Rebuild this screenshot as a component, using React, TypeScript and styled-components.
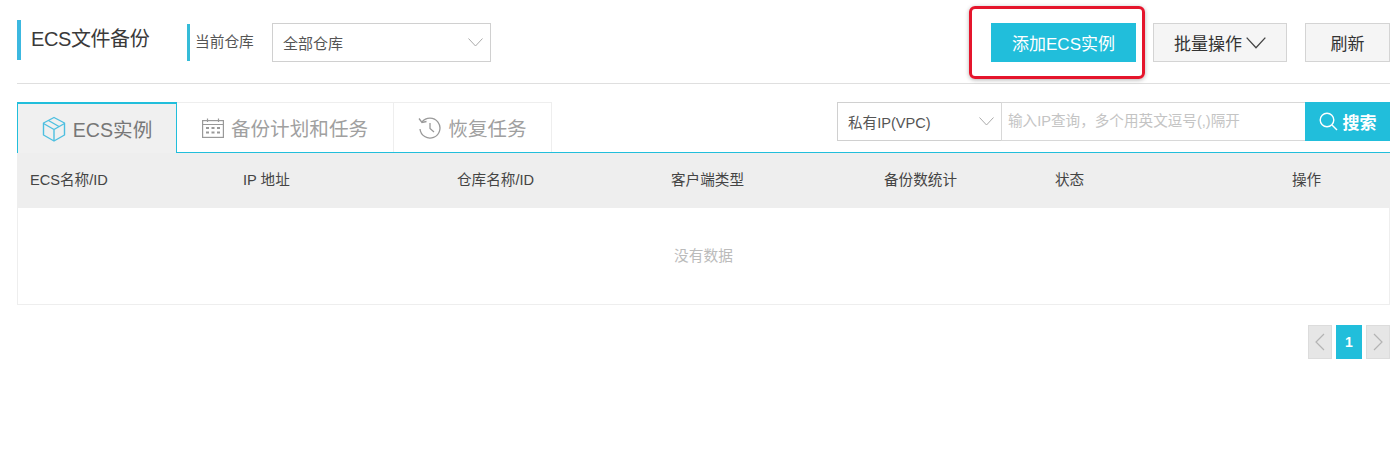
import React from "react";
import styled, { createGlobalStyle } from "styled-components";

const TEAL = "#21bedb";

const GlobalStyle = createGlobalStyle`
    body {
        margin: 0;
        background: #ffffff;
        font-family: "Liberation Sans", "Noto Sans CJK SC", sans-serif;
        color: #333333;
    }
`;

const Page = styled.div`
    width: 1373px;
    height: 469px;
    margin-left: 17px;
`;

const Header = styled.header`
    display: flex;
    align-items: flex-start;
    height: 63px;
    padding-top: 20px;
    border-bottom: 1px solid #dfdfdf;
`;

const Title = styled.h1`
    width: 170px;
    height: 40px;
    box-sizing: border-box;
    margin: 0;
    padding-left: 10px;
    border-left: 4px solid #3cb8e0;
    font-size: 20px;
    font-weight: 400;
    letter-spacing: -0.4px;
    line-height: 39px;
    color: #3a3a3a;
`;

const Warehouse = styled.div`
    display: flex;
    align-items: center;
    margin-top: 3px;
`;

const WarehouseLabel = styled.span`
    height: 37px;
    width: 85px;
    box-sizing: border-box;
    padding-left: 5px;
    border-left: 3px solid #35bcd8;
    font-size: 14.7px;
    line-height: 37px;
    color: #555555;
`;

const Select = styled.div<{ $width: number; $size: number }>`
    display: flex;
    align-items: center;
    justify-content: space-between;
    width: ${(p) => p.$width}px;
    height: 39px;
    box-sizing: border-box;
    padding: 0 7px 0 10px;
    background: #ffffff;
    border: 1px solid #d0d0d0;
    font-size: ${(p) => p.$size}px;
    color: #555555;
`;

const Actions = styled.div`
    display: flex;
    margin-left: auto;
    margin-top: 3px;
`;

const PrimaryButton = styled.button`
    position: relative;
    width: 145px;
    height: 39px;
    margin-right: 17px;
    padding: 0;
    border: 0;
    background: ${TEAL};
    color: #ffffff;
    font: inherit;
    font-size: 17px;

    /* red annotation drawn over the screenshot */
    &::after {
        content: "";
        position: absolute;
        left: -22px;
        top: -17px;
        width: 170px;
        height: 67px;
        border: 3px solid #e5152c;
        border-radius: 6px;
        box-shadow: 0 1px 4px rgba(0, 0, 0, 0.3);
    }
`;

const GreyButton = styled.button<{ $width: number; $gap?: number }>`
    display: flex;
    align-items: center;
    justify-content: center;
    gap: 4px;
    width: ${(p) => p.$width}px;
    height: 39px;
    margin-right: ${(p) => p.$gap ?? 0}px;
    padding: 0;
    border: 1px solid #d4d4d4;
    background: #f5f5f5;
    color: #333333;
    font: inherit;
    font-size: 17px;
`;

const ToolRow = styled.div`
    display: flex;
    align-items: flex-start;
    justify-content: space-between;
    box-sizing: border-box;
    height: 51px;
    margin-top: 18px;
    border-bottom: 1px solid ${TEAL};
`;

const Tabs = styled.div`
    display: flex;
`;

const Tab = styled.div<{ $width: number; $active?: boolean }>`
    position: relative;
    z-index: 1;
    display: flex;
    align-items: center;
    justify-content: center;
    gap: 7px;
    width: ${(p) => p.$width}px;
    height: ${(p) => (p.$active ? 51 : 50)}px;
    box-sizing: border-box;
    background: ${(p) => (p.$active ? "#f0f0f0" : "#ffffff")};
    border: 1px solid ${(p) => (p.$active ? TEAL : "#eeeeee")};
    border-top: ${(p) => (p.$active ? `2px solid ${TEAL}` : "1px solid #eeeeee")};
    border-bottom: 0;
    border-left-width: ${(p) => (p.$active ? 1 : 0)}px;
    font-size: 19.6px;
    color: ${(p) => (p.$active ? "#777777" : "#a0a0a0")};
`;

const Search = styled.div`
    display: flex;
    height: 39px;
`;

const SearchInput = styled.div`
    width: 304px;
    box-sizing: border-box;
    padding-left: 6px;
    margin-left: -1px;
    border: 1px solid #d8d8d8;
    border-right: 0;
    font-size: 14.6px;
    line-height: 37px;
    color: #c4c4c4;
`;

const SearchButton = styled.button`
    display: flex;
    align-items: center;
    justify-content: center;
    gap: 5px;
    width: 85px;
    padding: 0;
    border: 0;
    background: ${TEAL};
    color: #ffffff;
    font: inherit;
    font-size: 17px;
    font-weight: 700;
`;

const Table = styled.div`
    border: 1px solid #eeeeee;
    border-top: 0;
`;

const HeadRow = styled.div`
    display: grid;
    grid-template-columns: 213px 214px 214px 213px 171px 237px 1fr;
    align-items: center;
    box-sizing: border-box;
    height: 55px;
    margin: 0 -1px;
    padding: 0 0 5px 13px;
    background: #eeeeee;
    font-size: 14.6px;
    color: #444444;
`;

const Empty = styled.div`
    display: flex;
    align-items: center;
    justify-content: center;
    box-sizing: border-box;
    height: 96px;
    padding-bottom: 4px;
    font-size: 14.7px;
    color: #bbbbbb;
`;

const Pager = styled.nav`
    display: flex;
    justify-content: flex-end;
    gap: 4px;
    margin-top: 20px;
`;

const PageBox = styled.div<{ $active?: boolean }>`
    display: flex;
    align-items: center;
    justify-content: center;
    width: ${(p) => (p.$active ? 26 : 24)}px;
    height: 34px;
    box-sizing: border-box;
    border: ${(p) => (p.$active ? "0" : "1px solid #dcdcdc")};
    background: ${(p) => (p.$active ? TEAL : "#e6e6e6")};
    color: #ffffff;
    font-size: 14px;
    font-weight: 700;
`;

const Chevron = ({ size = 15, color = "#aaaaaa" }: { size?: number; color?: string }) => (
    <svg width={size} height={size * 0.6} viewBox="0 0 15 9" fill="none" stroke={color} strokeWidth="1">
        <path d="M0.5 0.5 L7.5 8 L14.5 0.5" />
    </svg>
);

const CubeIcon = () => (
    <svg width="24" height="26" viewBox="0 0 24 26" fill="none" stroke="#4dbfe0" strokeWidth="1.4" strokeLinejoin="round">
        <path d="M12 1.5 L22.5 7 V19 L12 25 L1.5 19 V7 Z" />
        <path d="M1.5 7.5 L12 13.5 L22.5 7.5 M12 13.5 V25" />
        <path d="M6.5 4.5 L17 10.5" />
    </svg>
);

const CalendarIcon = () => (
    <svg width="22" height="20" viewBox="0 0 22 20" fill="none" stroke="#999999" strokeWidth="1.2">
        <rect x="0.6" y="2.6" width="20.8" height="16.8" />
        <path d="M0.6 6.5 H21.4 M5.5 0.5 V4 M16.5 0.5 V4" />
        <path d="M4 10 H7 M9.5 10 H12.5 M15 10 H18 M4 14.5 H7 M9.5 14.5 H12.5 M15 14.5 H18" strokeWidth="2" />
    </svg>
);

const HistoryIcon = () => (
    <svg width="23" height="22" viewBox="0 0 23 22" fill="none" stroke="#999999" strokeWidth="1.3">
        <path d="M4 5 A10 10 0 1 1 2 12" />
        <path d="M1 1.5 L4 5.5 L8.5 4.5" />
        <path d="M12 6 V11.5 L16 15" />
    </svg>
);

const SearchIcon = () => (
    <svg width="19" height="19" viewBox="0 0 19 19" fill="none" stroke="#ffffff" strokeWidth="1.4">
        <circle cx="8" cy="8" r="6.8" />
        <path d="M13 13 L18 18" />
    </svg>
);

const PagerArrow = ({ flip }: { flip?: boolean }) => (
    <svg width="10" height="18" viewBox="0 0 10 18" fill="none" stroke="#b4b4b4" strokeWidth="1.2">
        <path d={flip ? "M1 1 L9 9 L1 17" : "M9 1 L1 9 L9 17"} />
    </svg>
);

const columns = ["ECS名称/ID", "IP 地址", "仓库名称/ID", "客户端类型", "备份数统计", "状态", "操作"];

export default function App(): React.JSX.Element {
    return (
        <Page>
            <GlobalStyle />
            <Header>
                <Title>ECS文件备份</Title>
                <Warehouse>
                    <WarehouseLabel>当前仓库</WarehouseLabel>
                    <Select $width={219} $size={15}>
                        全部仓库
                        <Chevron />
                    </Select>
                </Warehouse>
                <Actions>
                    <PrimaryButton>添加ECS实例</PrimaryButton>
                    <GreyButton $width={134} $gap={18}>
                        批量操作
                        <Chevron size={20} color="#444444" />
                    </GreyButton>
                    <GreyButton $width={85}>刷新</GreyButton>
                </Actions>
            </Header>
            <ToolRow>
                <Tabs>
                    <Tab $width={160} $active>
                        <CubeIcon />
                        ECS实例
                    </Tab>
                    <Tab $width={217}>
                        <CalendarIcon />
                        备份计划和任务
                    </Tab>
                    <Tab $width={158}>
                        <HistoryIcon />
                        恢复任务
                    </Tab>
                </Tabs>
                <Search>
                    <Select $width={165} $size={14.6}>
                        私有IP(VPC)
                        <Chevron />
                    </Select>
                    <SearchInput>输入IP查询，多个用英文逗号(,)隔开</SearchInput>
                    <SearchButton>
                        <SearchIcon />
                        搜索
                    </SearchButton>
                </Search>
            </ToolRow>
            <Table>
                <HeadRow>
                    {columns.map((name) => (
                        <span key={name}>{name}</span>
                    ))}
                </HeadRow>
                <Empty>没有数据</Empty>
            </Table>
            <Pager>
                <PageBox>
                    <PagerArrow />
                </PageBox>
                <PageBox $active>1</PageBox>
                <PageBox>
                    <PagerArrow flip />
                </PageBox>
            </Pager>
        </Page>
    );
}
